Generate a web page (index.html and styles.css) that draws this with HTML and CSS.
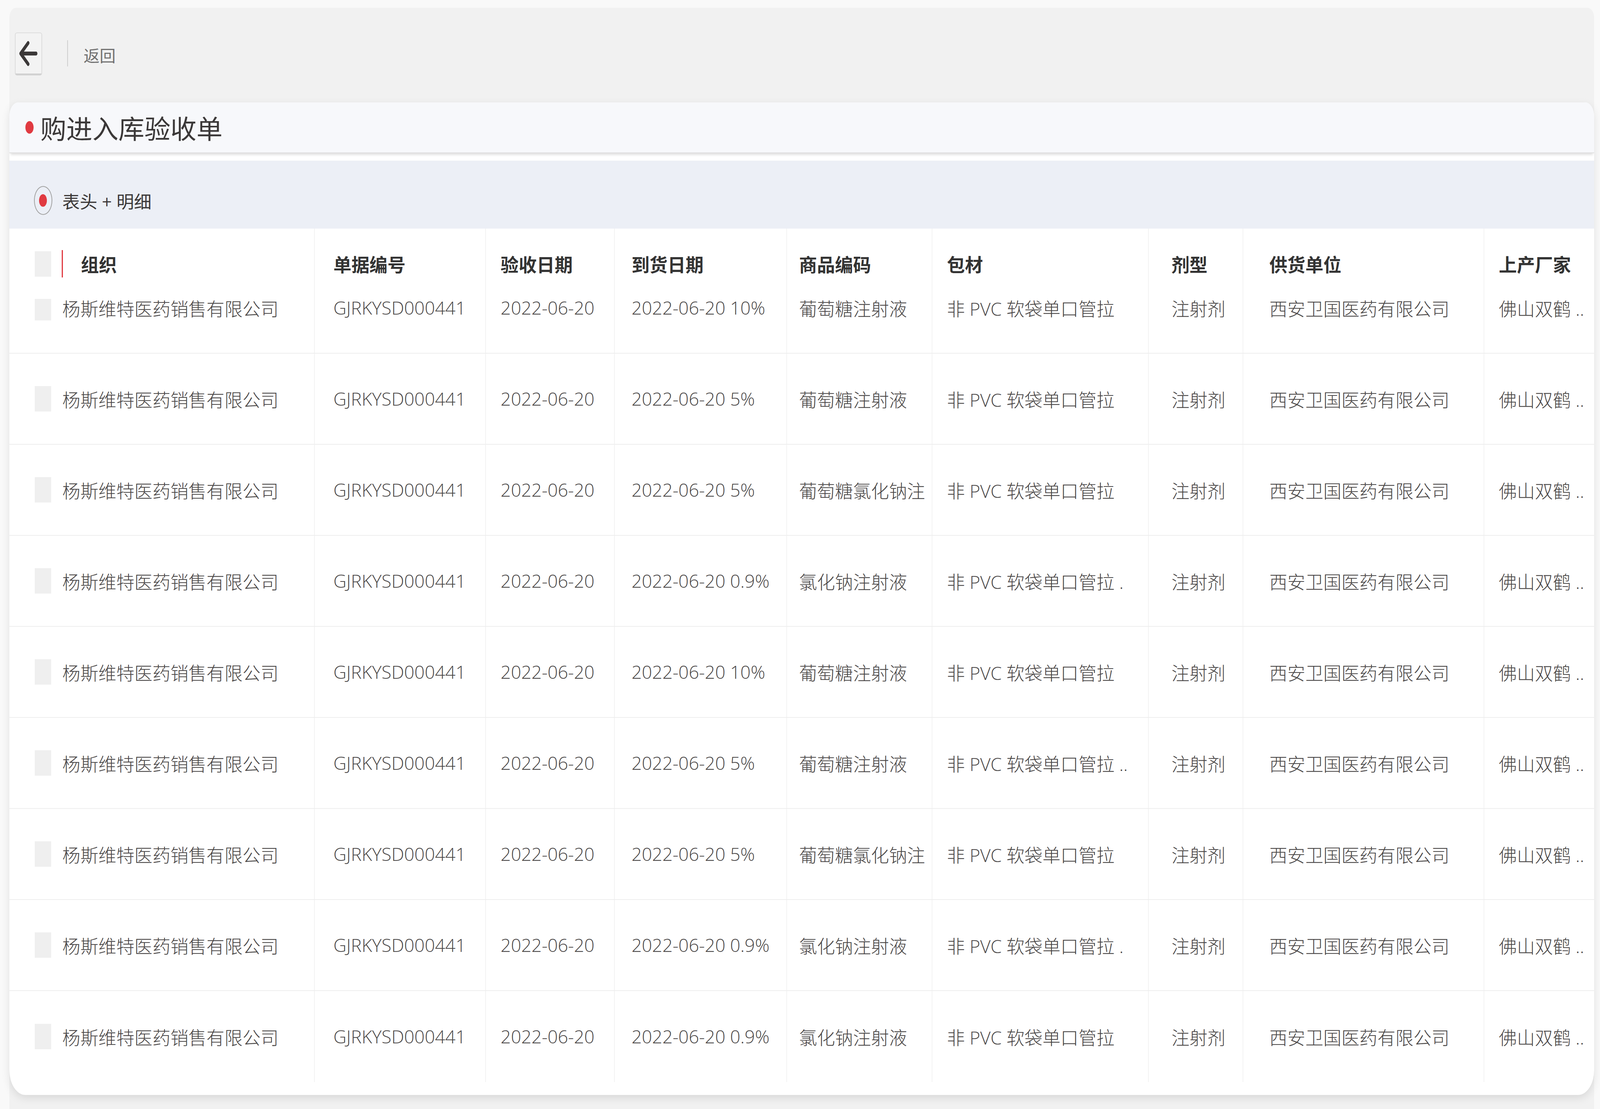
FILE: index.html
```html
<!DOCTYPE html>
<html lang="zh-CN">

<head>
  <meta charset="UTF-8">
  <meta name="viewport" content="width=device-width, initial-scale=1.0">
  <title>购进入库验收单</title>
  <link rel="stylesheet" href="styles.css">
</head>

<body>
  <div class="page">
    <div class="toolbar">
      <button class="back-btn">
        <svg class="back-icon" viewBox="0 0 74 70" preserveAspectRatio="none">
          <path d="M36 8 L6 35 L36 62 M6 35 H68" fill="none" stroke="#3b3838" stroke-width="10" stroke-linecap="round" stroke-linejoin="round"/>
        </svg>
      </button>
      <span class="divider"></span>
      <span class="back-text">返回</span>
    </div>

    <div class="card">
      <div class="card-title"><span class="dot"></span>购进入库验收单</div>

      <div class="mode-bar">
        <span class="radio"><span></span></span>
        <span class="mode-label">表头 + 明细</span>
      </div>

      <div class="table">
        <div class="row head">
          <div class="cell"><span class="check"></span><span class="mark"></span>组织</div>
          <div class="cell">单据编号</div>
          <div class="cell">验收日期</div>
          <div class="cell">到货日期</div>
          <div class="cell">商品编码</div>
          <div class="cell">包材</div>
          <div class="cell">剂型</div>
          <div class="cell">供货单位</div>
          <div class="cell">上产厂家</div>
        </div>

        <div class="rows">
          <div class="row item">
            <div class="cell"><span class="check"></span>杨斯维特医药销售有限公司</div>
            <div class="cell">GJRKYSD000441</div>
            <div class="cell">2022-06-20</div>
            <div class="cell">2022-06-20 10%</div>
            <div class="cell">葡萄糖注射液</div>
            <div class="cell">非 PVC 软袋单口管拉</div>
            <div class="cell">注射剂</div>
            <div class="cell">西安卫国医药有限公司</div>
            <div class="cell">佛山双鹤 ..</div>
          </div>
          <div class="row item">
            <div class="cell"><span class="check"></span>杨斯维特医药销售有限公司</div>
            <div class="cell">GJRKYSD000441</div>
            <div class="cell">2022-06-20</div>
            <div class="cell">2022-06-20 5%</div>
            <div class="cell">葡萄糖注射液</div>
            <div class="cell">非 PVC 软袋单口管拉</div>
            <div class="cell">注射剂</div>
            <div class="cell">西安卫国医药有限公司</div>
            <div class="cell">佛山双鹤 ..</div>
          </div>
          <div class="row item">
            <div class="cell"><span class="check"></span>杨斯维特医药销售有限公司</div>
            <div class="cell">GJRKYSD000441</div>
            <div class="cell">2022-06-20</div>
            <div class="cell">2022-06-20 5%</div>
            <div class="cell">葡萄糖氯化钠注</div>
            <div class="cell">非 PVC 软袋单口管拉</div>
            <div class="cell">注射剂</div>
            <div class="cell">西安卫国医药有限公司</div>
            <div class="cell">佛山双鹤 ..</div>
          </div>
          <div class="row item">
            <div class="cell"><span class="check"></span>杨斯维特医药销售有限公司</div>
            <div class="cell">GJRKYSD000441</div>
            <div class="cell">2022-06-20</div>
            <div class="cell">2022-06-20 0.9%</div>
            <div class="cell">氯化钠注射液</div>
            <div class="cell">非 PVC 软袋单口管拉 .</div>
            <div class="cell">注射剂</div>
            <div class="cell">西安卫国医药有限公司</div>
            <div class="cell">佛山双鹤 ..</div>
          </div>
          <div class="row item">
            <div class="cell"><span class="check"></span>杨斯维特医药销售有限公司</div>
            <div class="cell">GJRKYSD000441</div>
            <div class="cell">2022-06-20</div>
            <div class="cell">2022-06-20 10%</div>
            <div class="cell">葡萄糖注射液</div>
            <div class="cell">非 PVC 软袋单口管拉</div>
            <div class="cell">注射剂</div>
            <div class="cell">西安卫国医药有限公司</div>
            <div class="cell">佛山双鹤 ..</div>
          </div>
          <div class="row item">
            <div class="cell"><span class="check"></span>杨斯维特医药销售有限公司</div>
            <div class="cell">GJRKYSD000441</div>
            <div class="cell">2022-06-20</div>
            <div class="cell">2022-06-20 5%</div>
            <div class="cell">葡萄糖注射液</div>
            <div class="cell">非 PVC 软袋单口管拉 ..</div>
            <div class="cell">注射剂</div>
            <div class="cell">西安卫国医药有限公司</div>
            <div class="cell">佛山双鹤 ..</div>
          </div>
          <div class="row item">
            <div class="cell"><span class="check"></span>杨斯维特医药销售有限公司</div>
            <div class="cell">GJRKYSD000441</div>
            <div class="cell">2022-06-20</div>
            <div class="cell">2022-06-20 5%</div>
            <div class="cell">葡萄糖氯化钠注</div>
            <div class="cell">非 PVC 软袋单口管拉</div>
            <div class="cell">注射剂</div>
            <div class="cell">西安卫国医药有限公司</div>
            <div class="cell">佛山双鹤 ..</div>
          </div>
          <div class="row item">
            <div class="cell"><span class="check"></span>杨斯维特医药销售有限公司</div>
            <div class="cell">GJRKYSD000441</div>
            <div class="cell">2022-06-20</div>
            <div class="cell">2022-06-20 0.9%</div>
            <div class="cell">氯化钠注射液</div>
            <div class="cell">非 PVC 软袋单口管拉 .</div>
            <div class="cell">注射剂</div>
            <div class="cell">西安卫国医药有限公司</div>
            <div class="cell">佛山双鹤 ..</div>
          </div>
          <div class="row item">
            <div class="cell"><span class="check"></span>杨斯维特医药销售有限公司</div>
            <div class="cell">GJRKYSD000441</div>
            <div class="cell">2022-06-20</div>
            <div class="cell">2022-06-20 0.9%</div>
            <div class="cell">氯化钠注射液</div>
            <div class="cell">非 PVC 软袋单口管拉</div>
            <div class="cell">注射剂</div>
            <div class="cell">西安卫国医药有限公司</div>
            <div class="cell">佛山双鹤 ..</div>
          </div>
        </div>
      </div>
    </div>
  </div>
</body>

</html>
```

FILE: styles.css
```css
/* horizontal unit: 1px of the 6392px wide design */
:root {
  --u: calc(100vw / 6392);
}

html,
body {
  margin: 0;
  height: 100%;
}

body {
  box-sizing: border-box;
  padding: 20px calc(24 * var(--u)) 0 calc(37 * var(--u));
  overflow: hidden;
  background-color: #f9f9f9;
  font-family: "Open Sans", "Noto Sans CJK SC", sans-serif;
  color: #3b3838;
}

.page {
  height: 100%;
  background-color: #f1f1f1;
  border-radius: calc(26 * var(--u)) calc(26 * var(--u)) 0 0 / 26px 26px 0 0;
}

/* top bar */
.toolbar {
  box-sizing: border-box;
  height: 242px;
  display: flex;
  align-items: flex-start;
  padding: 63px 0 0 calc(22 * var(--u));
}

.back-btn {
  box-sizing: border-box;
  width: calc(110 * var(--u));
  height: 110px;
  padding: 0;
  display: flex;
  align-items: center;
  justify-content: center;
  background-color: #f3f3f3;
  border: 2px solid #dddddd;
  border-bottom: 5px solid #d2d2d2;
  border-radius: 6px;
}

.back-icon {
  width: calc(74 * var(--u));
  height: 70px;
}

.divider {
  width: calc(3 * var(--u));
  min-width: 2px;
  height: 67px;
  margin: 20px 0 0 calc(100 * var(--u));
  background-color: #cfcfcf;
}

.back-text {
  margin: 4px 0 0 calc(62 * var(--u));
  font-size: calc(64 * var(--u));
  line-height: 110px;
  color: #707070;
}

/* card */
.card {
  padding-bottom: 33px;
  background-color: #fff;
  border-radius: calc(36 * var(--u)) calc(36 * var(--u)) calc(64 * var(--u)) calc(64 * var(--u)) / 36px 36px 64px 64px;
  box-shadow: 0 8px 22px rgba(0, 0, 0, 0.1);
  overflow: hidden;
}

.card-title {
  position: relative;
  box-sizing: border-box;
  height: 130px;
  display: flex;
  align-items: center;
  padding-left: calc(65 * var(--u));
  background-color: #f7f8fb;
  border-bottom: 2px solid #e0e0e0;
  box-shadow: 0 7px 6px -3px rgba(0, 0, 0, 0.13);
  font-size: calc(104 * var(--u));
  color: #3b3838;
}

.dot {
  width: calc(32 * var(--u));
  height: 32px;
  margin-right: calc(27 * var(--u));
  border-radius: 50%;
  background-color: #e03a41;
}

.mode-bar {
  box-sizing: border-box;
  height: 174px;
  margin-top: 19px;
  display: flex;
  align-items: center;
  padding: 30px 0 0 calc(98 * var(--u));
  background-color: #eceff6;
}

.radio {
  box-sizing: border-box;
  width: calc(74 * var(--u));
  height: 74px;
  display: flex;
  align-items: center;
  justify-content: center;
  border: 2px solid #a3a3a3;
  border-radius: 50%;
}

.radio span {
  width: calc(32 * var(--u));
  height: 32px;
  border-radius: 50%;
  background-color: #e03a41;
}

.mode-label {
  margin-left: calc(40 * var(--u));
  font-size: calc(70 * var(--u));
  color: #3b3838;
}

/* table */
.row {
  box-sizing: border-box;
  display: grid;
  grid-template-columns:
    calc(1221 * var(--u)) calc(684 * var(--u)) calc(514 * var(--u))
    calc(689 * var(--u)) calc(580 * var(--u)) calc(865 * var(--u))
    calc(378 * var(--u)) calc(962 * var(--u)) calc(437 * var(--u));
}

.head {
  position: relative;
  z-index: 1;
  height: 180px;
  background-color: #fff;
  font-weight: 700;
  color: #333;
}

.rows {
  margin-top: -93px;
}

.item {
  height: 233px;
  border-bottom: 2px solid #eeeeee;
  font-weight: 300;
  color: #4a4747;
}

.item:last-child {
  border-bottom: none;
}

.cell {
  box-sizing: border-box;
  display: flex;
  align-items: center;
  border-right: 2px solid #f3f3f3;
  font-size: calc(72 * var(--u));
  white-space: nowrap;
  overflow: hidden;
}

.cell:last-child {
  border-right: none;
}

.cell:nth-child(1) { padding-left: calc(102 * var(--u)); }
.cell:nth-child(2) { padding-left: calc(74 * var(--u)); }
.cell:nth-child(3) { padding-left: calc(58 * var(--u)); }
.cell:nth-child(4) { padding-left: calc(67 * var(--u)); }
.cell:nth-child(5) { padding-left: calc(47 * var(--u)); }
.cell:nth-child(6) { padding-left: calc(58 * var(--u)); }
.cell:nth-child(7) { padding-left: calc(90 * var(--u)); }
.cell:nth-child(8) { padding-left: calc(103 * var(--u)); }
.cell:nth-child(9) { padding-left: calc(58 * var(--u)); }

.check {
  flex: none;
  width: calc(65 * var(--u));
  height: 65px;
  margin-right: calc(45 * var(--u));
  background-color: #efefef;
}

.head .check {
  margin-right: calc(43 * var(--u));
}

.mark {
  flex: none;
  width: calc(5 * var(--u));
  min-width: 3px;
  height: 70px;
  margin-right: calc(71 * var(--u));
  background-color: #e03a41;
}
```
